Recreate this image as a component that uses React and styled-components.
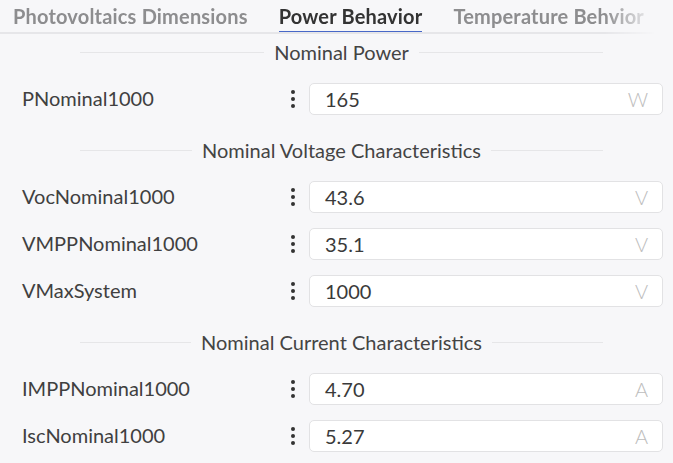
import React from "react";
import styled, { createGlobalStyle } from "styled-components";

const Global = createGlobalStyle`
  html, body { margin: 0; padding: 0; background: #f7f7f9; }
  body { font-family: Lato, "Noto Sans", sans-serif; color: #3a3a3a; }
  * { box-sizing: border-box; }
`;

const Page = styled.div`
  width: 673px;
  min-height: 463px;
  background: #f7f7f9;
  overflow: hidden;
`;

const TabBar = styled.div`
  display: flex;
  gap: 31px;
  padding-left: 13px;
  margin-right: 8px;
  height: 34px;
  border-bottom: 2px solid #e6e6e9;
  white-space: nowrap;
  overflow: hidden;
  -webkit-mask-image: linear-gradient(to right, #000 0, #000 605px, transparent 655px);
  mask-image: linear-gradient(to right, #000 0, #000 605px, transparent 655px);
`;

const Tab = styled.div`
  position: relative;
  font-size: 20px;
  font-weight: 700;
  letter-spacing: 0.18px;
  line-height: 32px;
  color: ${(p) => (p.$active ? "#333" : "#8d8d8f")};
  &::after {
    content: "";
    display: ${(p) => (p.$active ? "block" : "none")};
    position: absolute;
    left: 0;
    right: 0;
    bottom: -2px;
    height: 3px;
    background: #4868c8;
  }
`;

const Content = styled.div`
  display: flex;
  flex-direction: column;
  padding-top: 3px;
`;

const Section = styled.div`
  display: flex;
  align-items: center;
  gap: 10px;
  height: 30px;
  margin: ${(p) => (p.$first ? "0" : "20px")} 70px 0 80px;
  font-size: 20px;
  color: #444;
  white-space: nowrap;
  &::before, &::after {
    content: "";
    flex: 1;
    height: 1px;
    background: #e6e6e8;
  }
`;

const Row = styled.div`
  display: grid;
  grid-template-columns: 1fr 16px 354px;
  column-gap: 8px;
  align-items: center;
  height: 32px;
  margin-top: ${(p) => (p.$afterSection ? "16px" : "15px")};
  padding: 0 10px 0 22px;
`;

const Label = styled.div`
  font-size: 20px;
  color: #404040;
  padding-bottom: 2px;
`;

const Dots = styled.div`
  display: flex;
  flex-direction: column;
  align-items: center;
  gap: 3px;
  span {
    width: 4px;
    height: 4px;
    border-radius: 50%;
    background: #333;
  }
`;

const Field = styled.div`
  display: flex;
  align-items: center;
  justify-content: space-between;
  height: 32px;
  padding: 0 14px 0 15px;
  background: #fff;
  border: 1px solid #e2e2e4;
  border-radius: 5px;
`;

const Value = styled.span`
  font-size: 20px;
  color: #3a3a3a;
`;

const Unit = styled.span`
  font-size: 20px;
  font-weight: 300;
  color: #bdbdbd;
`;

const sections = [
  {
    title: "Nominal Power",
    rows: [{ label: "PNominal1000", value: "165", unit: "W" }],
  },
  {
    title: "Nominal Voltage Characteristics",
    rows: [
      { label: "VocNominal1000", value: "43.6", unit: "V" },
      { label: "VMPPNominal1000", value: "35.1", unit: "V" },
      { label: "VMaxSystem", value: "1000", unit: "V" },
    ],
  },
  {
    title: "Nominal Current Characteristics",
    rows: [
      { label: "IMPPNominal1000", value: "4.70", unit: "A" },
      { label: "IscNominal1000", value: "5.27", unit: "A" },
    ],
  },
];

export default function App() {
  return (
    <Page>
      <Global />
      <TabBar>
        <Tab>Photovoltaics Dimensions</Tab>
        <Tab $active>Power Behavior</Tab>
        <Tab>Temperature Behvior</Tab>
      </TabBar>
      <Content>
        {sections.map((s, si) => (
          <React.Fragment key={s.title}>
            <Section $first={si === 0}>{s.title}</Section>
            {s.rows.map((r, ri) => (
              <Row key={r.label} $afterSection={ri === 0}>
                <Label>{r.label}</Label>
                <Dots>
                  <span />
                  <span />
                  <span />
                </Dots>
                <Field>
                  <Value>{r.value}</Value>
                  <Unit>{r.unit}</Unit>
                </Field>
              </Row>
            ))}
          </React.Fragment>
        ))}
      </Content>
    </Page>
  );
}
